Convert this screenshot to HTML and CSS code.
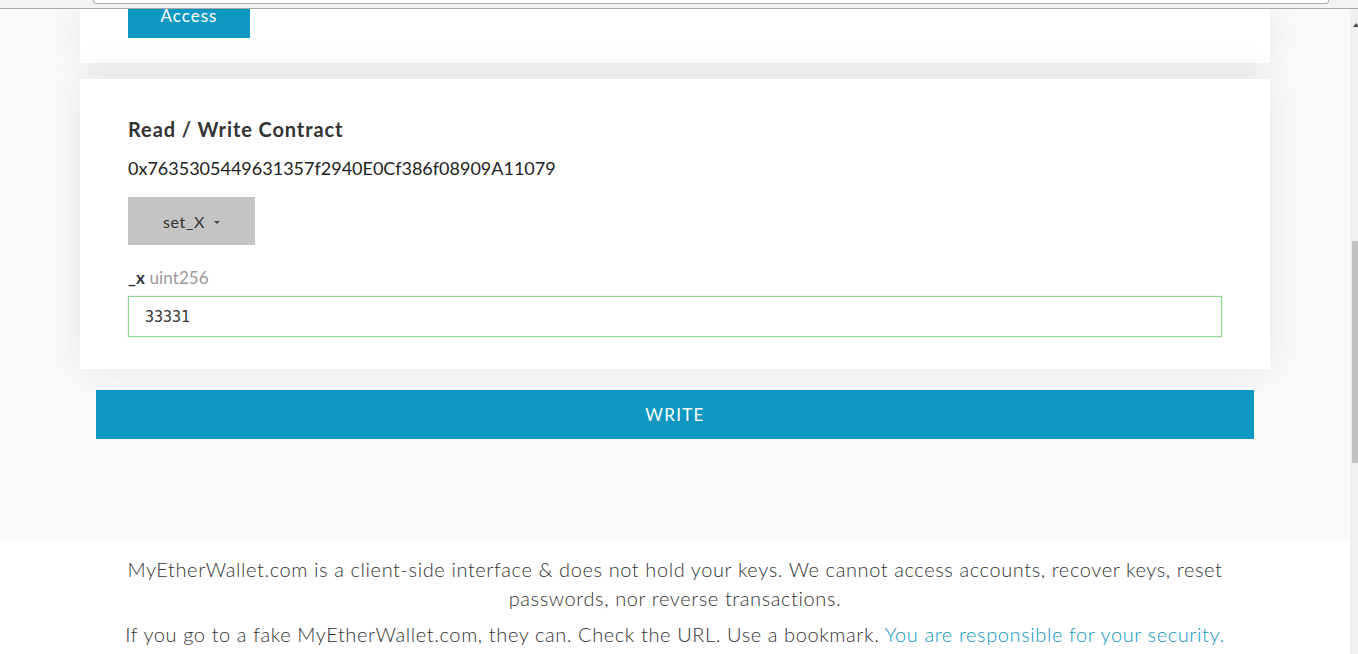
FILE: index.html
```html
<!DOCTYPE html>
<html lang="en">
<head>
<meta charset="utf-8">
<title>MyEtherWallet - Contracts</title>
<link rel="stylesheet" href="styles.css">
</head>
<body>
  <div class="chrome"><div class="urlbox"></div></div>
  <div class="viewport">
    <div class="content">
      <main class="page">
        <section class="card card-top">
          <button class="btn-access">Access</button>
        </section>
        <section class="card card-contract">
          <h2 class="contract-title">Read / Write Contract</h2>
          <p class="contract-address">0x7635305449631357f2940E0Cf386f08909A11079</p>
          <button class="btn-select">set_X <span class="caret"></span></button>
          <label class="field-label" for="x"><b>_x</b> <span class="field-type">uint256</span></label>
          <input id="x" class="field-input" type="text" value="33331">
        </section>
        <div class="write-wrap">
          <button class="btn-write">WRITE</button>
        </div>
      </main>
      <footer class="footer">
        <p>MyEtherWallet.com is a client-side interface &amp; does not hold your keys. We cannot access accounts, recover keys, reset passwords, nor reverse transactions.</p>
        <p>If you go to a fake MyEtherWallet.com, they can. Check the URL. Use a bookmark. <a href="#">You are responsible for your security.</a></p>
      </footer>
    </div>
    <div class="scrollbar">
      <span class="sb-arrow"></span>
      <span class="sb-thumb"></span>
    </div>
  </div>
</body>
</html>
```

FILE: styles.css
```css
* { box-sizing: border-box; }
html, body { margin: 0; padding: 0; height: 100%; overflow: hidden; }
body {
  font-family: Lato, "Open Sans", "Liberation Sans", sans-serif;
  color: #333;
  background: #fafafa;
}

.chrome {
  height: 9px;
  background: #f2f2f2;
  border-bottom: 1px solid #a8a8a8;
  position: relative;
}
.urlbox {
  position: absolute;
  left: 93px;
  right: 29px;
  top: -6px;
  height: 10px;
  background: #fff;
  border: 1px solid #a9a9a9;
  border-radius: 3px;
}

.viewport {
  display: grid;
  grid-template-columns: 1fr 8px;
  height: calc(100% - 9px);
}
.content { display: flex; flex-direction: column; }

.page {
  height: 531px;
  background: #fafafa;
  overflow: hidden;
  padding: 0 80px;
}

.card {
  background: #fff;
  box-shadow: 0 0 40px rgba(0, 0, 0, 0.09);
}
.card-top {
  height: 54px;
  padding: 0 48px;
  overflow: hidden;
}
.btn-access {
  display: block;
  width: 122px;
  height: 29px;
  border: 0;
  background: #0e97c0;
  color: #fff;
  font-family: Lato, sans-serif;
  font-size: 17px;
  line-height: 13px;
  letter-spacing: 1px;
  padding: 0 0 16px;
}

.card-contract {
  margin-top: 16px;
  height: 290px;
  padding: 38px 48px 0;
  display: flex;
  flex-direction: column;
  align-items: flex-start;
}
.contract-title {
  margin: 0;
  font-size: 20px;
  line-height: 24px;
  font-weight: 700;
  letter-spacing: 0.9px;
  color: #333;
}
.contract-address {
  margin: 15px 0 0;
  font-size: 18px;
  line-height: 24px;
  color: #222;
}
.btn-select {
  margin-top: 17px;
  width: 127px;
  height: 48px;
  border: 0;
  background: #c4c4c4;
  color: #333;
  font-family: Lato, sans-serif;
  font-size: 16px;
  letter-spacing: 0.6px;
  display: flex;
  align-items: center;
  justify-content: center;
  gap: 9px;
  padding: 0;
}
.caret {
  width: 0;
  height: 0;
  border-left: 3px solid transparent;
  border-right: 3px solid transparent;
  border-top: 3px solid #444;
  margin-top: 3px;
}
.field-label {
  margin-top: 21px;
  font-size: 17px;
  line-height: 24px;
  letter-spacing: 0.1px;
  color: #333;
}
.field-label b { font-weight: 700; }
.field-type { color: #9a9a9a; font-weight: 400; }
.field-input {
  margin-top: 6px;
  width: 100%;
  height: 41px;
  border: 1px solid #8fd68f;
  box-shadow: 0 0 2px rgba(120, 210, 120, 0.5);
  padding: 0 16px;
  font-family: "DejaVu Sans Mono", "Liberation Mono", monospace;
  font-size: 15px;
  color: #333;
  outline: none;
  background: #fff;
}

.write-wrap {
  padding: 21px 16px 0;
}
.btn-write {
  display: block;
  width: 100%;
  height: 49px;
  border: 0;
  background: #0e97c0;
  color: #fff;
  font-family: Lato, sans-serif;
  font-size: 17px;
  letter-spacing: 1.3px;
  padding: 0;
}

.footer {
  flex: 1;
  background: #fff;
  padding: 15px 120px 0;
  text-align: center;
  font-size: 20px;
  font-weight: 300;
  letter-spacing: 0.6px;
  line-height: 28.5px;
  color: #333;
}
.footer p { margin: 0 0 8px; }
.footer a { color: #0e97c0; text-decoration: none; }

.scrollbar {
  background: #f0f0f0;
  position: relative;
}
.sb-arrow {
  position: absolute;
  top: 14px;
  left: 3px;
  width: 0;
  height: 0;
  border-left: 3px solid transparent;
  border-right: 3px solid transparent;
  border-bottom: 4px solid #505050;
}
.sb-thumb {
  position: absolute;
  left: 2px;
  right: 0;
  top: 232px;
  height: 222px;
  background: #c1c1c1;
}
```
